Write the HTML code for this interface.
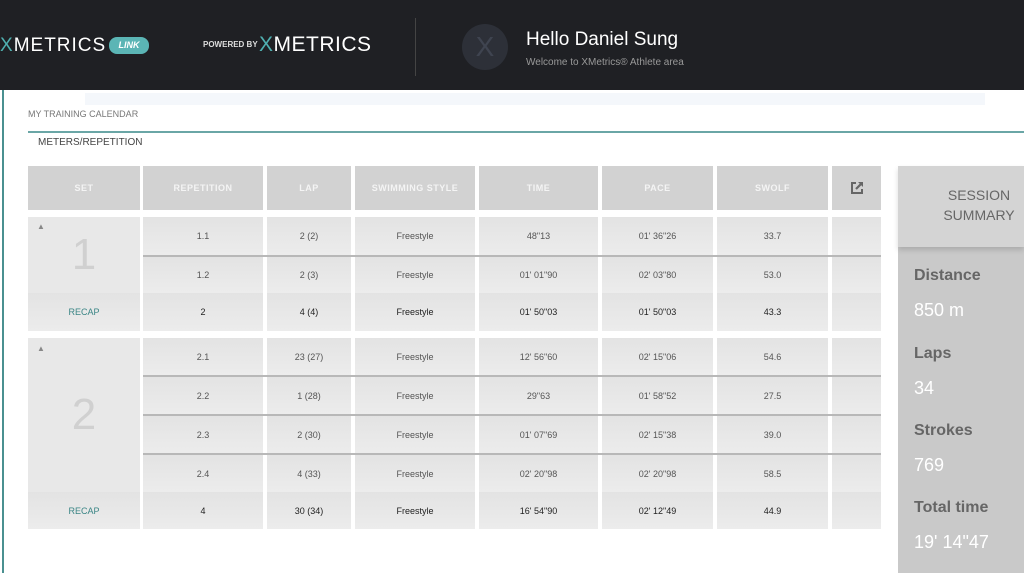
<!DOCTYPE html>
<html><head><meta charset="utf-8"><style>
*{margin:0;padding:0;box-sizing:border-box}
body{width:1024px;height:573px;overflow:hidden;background:#fff;font-family:"Liberation Sans",sans-serif;position:relative}
.a{position:absolute}
.hdr{left:0;top:0;width:1024px;height:90px;background:#1f2024}
.c{position:absolute;display:flex;align-items:center;justify-content:center;font-size:9px;color:#555;background:linear-gradient(#e3e3e3,#ececec)}
.h{background:#d2d2d2;color:#f4f4f4;font-weight:bold;font-size:9px;letter-spacing:.5px}
.r{color:#222}
.big{color:#d0d0d0;font-size:44px;font-weight:normal}
.sep{position:absolute;height:2px;background:#b8b8b8}
.lbl{font-weight:bold;color:#666;font-size:16px;left:914px}
.val{color:#fff;font-size:18px;left:914px}
</style></head><body>
<div class="a hdr"></div>
<div class="a" style="left:0;top:35px;color:#fff;font-size:19px;letter-spacing:1px"><span style="color:#4fb0b0">X</span>METRICS</div>
<div class="a" style="left:109px;top:37px;width:40px;height:17px;border-radius:8px;background:#5bb5b5;color:#fff;font-size:9px;font-style:italic;font-weight:bold;text-align:center;line-height:17px">LINK</div>
<div class="a" style="left:203px;top:40px;color:#ddd;font-size:8px;font-weight:bold">POWERED BY</div>
<div class="a" style="left:259px;top:33px;color:#fff;font-size:21px;letter-spacing:.5px"><span style="color:#4fb0b0">X</span>METRICS</div>
<div class="a" style="left:415px;top:18px;width:1px;height:58px;background:#444"></div>
<div class="a" style="left:462px;top:24px;width:46px;height:46px;border-radius:50%;background:#2d3038;color:#3f4450;font-size:28px;text-align:center;line-height:46px">X</div>
<div class="a" style="left:526px;top:29px;color:#fff;font-size:19px">Hello Daniel Sung</div>
<div class="a" style="left:526px;top:57px;color:#999;font-size:10px">Welcome to XMetrics® Athlete area</div>
<div class="a" style="left:2px;top:90px;width:2px;height:483px;background:#4a9090"></div>
<div class="a" style="left:85px;top:93px;width:900px;height:12px;background:#f4f7fb"></div>
<div class="a" style="left:28px;top:109px;color:#777;font-size:9px">MY TRAINING CALENDAR</div>
<div class="a" style="left:28px;top:131px;width:996px;height:2px;background:#6aa6a6"></div>
<div class="a" style="left:38px;top:137px;color:#444;font-size:10px">METERS/REPETITION</div>

<div class="c h" style="left:28px;top:166px;width:112px;height:44px">SET</div>
<div class="c h" style="left:143px;top:166px;width:120px;height:44px">REPETITION</div>
<div class="c h" style="left:267px;top:166px;width:84px;height:44px">LAP</div>
<div class="c h" style="left:355px;top:166px;width:120px;height:44px">SWIMMING STYLE</div>
<div class="c h" style="left:479px;top:166px;width:119px;height:44px">TIME</div>
<div class="c h" style="left:602px;top:166px;width:111px;height:44px">PACE</div>
<div class="c h" style="left:717px;top:166px;width:111px;height:44px">SWOLF</div>
<div class="c h" style="left:832px;top:166px;width:49px;height:44px"><svg width="14" height="14" viewBox="0 0 14 14"><path d="M6 2H2v10h10V8" fill="none" stroke="#666" stroke-width="2"/><path d="M8 1h5v5z" fill="#666"/><path d="M12 2L6 8" stroke="#666" stroke-width="2.2"/></svg></div>

<div class="c big" style="left:28px;top:217px;width:112px;height:76px;background:#e8e8e8">1</div>
<div class="a" style="left:37px;top:222px;color:#888;font-size:8px">▲</div>
<div class="c" style="left:143px;top:217px;width:120px;height:38px">1.1</div>
<div class="c" style="left:267px;top:217px;width:84px;height:38px">2 (2)</div>
<div class="c" style="left:355px;top:217px;width:120px;height:38px">Freestyle</div>
<div class="c" style="left:479px;top:217px;width:119px;height:38px">48"13</div>
<div class="c" style="left:602px;top:217px;width:111px;height:38px">01' 36"26</div>
<div class="c" style="left:717px;top:217px;width:111px;height:38px">33.7</div>
<div class="c" style="left:832px;top:217px;width:49px;height:38px"></div>
<div class="sep" style="left:143px;top:255px;width:738px"></div>
<div class="c" style="left:143px;top:257px;width:120px;height:36px">1.2</div>
<div class="c" style="left:267px;top:257px;width:84px;height:36px">2 (3)</div>
<div class="c" style="left:355px;top:257px;width:120px;height:36px">Freestyle</div>
<div class="c" style="left:479px;top:257px;width:119px;height:36px">01' 01"90</div>
<div class="c" style="left:602px;top:257px;width:111px;height:36px">02' 03"80</div>
<div class="c" style="left:717px;top:257px;width:111px;height:36px">53.0</div>
<div class="c" style="left:832px;top:257px;width:49px;height:36px"></div>
<div class="c" style="left:28px;top:293px;width:112px;height:38px;color:#3a8585">RECAP</div>
<div class="c r" style="left:143px;top:293px;width:120px;height:38px">2</div>
<div class="c r" style="left:267px;top:293px;width:84px;height:38px">4 (4)</div>
<div class="c r" style="left:355px;top:293px;width:120px;height:38px">Freestyle</div>
<div class="c r" style="left:479px;top:293px;width:119px;height:38px">01' 50"03</div>
<div class="c r" style="left:602px;top:293px;width:111px;height:38px">01' 50"03</div>
<div class="c r" style="left:717px;top:293px;width:111px;height:38px">43.3</div>
<div class="c" style="left:832px;top:293px;width:49px;height:38px"></div>

<div class="c big" style="left:28px;top:338px;width:112px;height:154px;background:#e8e8e8">2</div>
<div class="a" style="left:37px;top:344px;color:#888;font-size:8px">▲</div>
<div class="c" style="left:143px;top:338px;width:120px;height:37px">2.1</div>
<div class="c" style="left:267px;top:338px;width:84px;height:37px">23 (27)</div>
<div class="c" style="left:355px;top:338px;width:120px;height:37px">Freestyle</div>
<div class="c" style="left:479px;top:338px;width:119px;height:37px">12' 56"60</div>
<div class="c" style="left:602px;top:338px;width:111px;height:37px">02' 15"06</div>
<div class="c" style="left:717px;top:338px;width:111px;height:37px">54.6</div>
<div class="c" style="left:832px;top:338px;width:49px;height:37px"></div>
<div class="sep" style="left:143px;top:375px;width:738px"></div>
<div class="c" style="left:143px;top:377px;width:120px;height:37px">2.2</div>
<div class="c" style="left:267px;top:377px;width:84px;height:37px">1 (28)</div>
<div class="c" style="left:355px;top:377px;width:120px;height:37px">Freestyle</div>
<div class="c" style="left:479px;top:377px;width:119px;height:37px">29"63</div>
<div class="c" style="left:602px;top:377px;width:111px;height:37px">01' 58"52</div>
<div class="c" style="left:717px;top:377px;width:111px;height:37px">27.5</div>
<div class="c" style="left:832px;top:377px;width:49px;height:37px"></div>
<div class="sep" style="left:143px;top:414px;width:738px"></div>
<div class="c" style="left:143px;top:416px;width:120px;height:37px">2.3</div>
<div class="c" style="left:267px;top:416px;width:84px;height:37px">2 (30)</div>
<div class="c" style="left:355px;top:416px;width:120px;height:37px">Freestyle</div>
<div class="c" style="left:479px;top:416px;width:119px;height:37px">01' 07"69</div>
<div class="c" style="left:602px;top:416px;width:111px;height:37px">02' 15"38</div>
<div class="c" style="left:717px;top:416px;width:111px;height:37px">39.0</div>
<div class="c" style="left:832px;top:416px;width:49px;height:37px"></div>
<div class="sep" style="left:143px;top:453px;width:738px"></div>
<div class="c" style="left:143px;top:455px;width:120px;height:37px">2.4</div>
<div class="c" style="left:267px;top:455px;width:84px;height:37px">4 (33)</div>
<div class="c" style="left:355px;top:455px;width:120px;height:37px">Freestyle</div>
<div class="c" style="left:479px;top:455px;width:119px;height:37px">02' 20"98</div>
<div class="c" style="left:602px;top:455px;width:111px;height:37px">02' 20"98</div>
<div class="c" style="left:717px;top:455px;width:111px;height:37px">58.5</div>
<div class="c" style="left:832px;top:455px;width:49px;height:37px"></div>
<div class="c" style="left:28px;top:492px;width:112px;height:37px;color:#3a8585">RECAP</div>
<div class="c r" style="left:143px;top:492px;width:120px;height:37px">4</div>
<div class="c r" style="left:267px;top:492px;width:84px;height:37px">30 (34)</div>
<div class="c r" style="left:355px;top:492px;width:120px;height:37px">Freestyle</div>
<div class="c r" style="left:479px;top:492px;width:119px;height:37px">16' 54"90</div>
<div class="c r" style="left:602px;top:492px;width:111px;height:37px">02' 12"49</div>
<div class="c r" style="left:717px;top:492px;width:111px;height:37px">44.9</div>
<div class="c" style="left:832px;top:492px;width:49px;height:37px"></div>

<div class="a" style="left:898px;top:166px;width:126px;height:407px;background:#c9c9c9"></div>
<div class="a" style="left:898px;top:166px;width:126px;height:81px;background:#d4d4d4;box-shadow:0 3px 5px rgba(0,0,0,.15);color:#666;font-size:14px;text-align:center;padding-top:19px;padding-left:36px;line-height:20px">SESSION<br>SUMMARY</div>
<div class="a lbl" style="top:267px">Distance</div>
<div class="a val" style="top:300px">850 m</div>
<div class="a lbl" style="top:345px">Laps</div>
<div class="a val" style="top:378px">34</div>
<div class="a lbl" style="top:422px">Strokes</div>
<div class="a val" style="top:455px">769</div>
<div class="a lbl" style="top:499px">Total time</div>
<div class="a val" style="top:532px">19' 14"47</div>
</body></html>
